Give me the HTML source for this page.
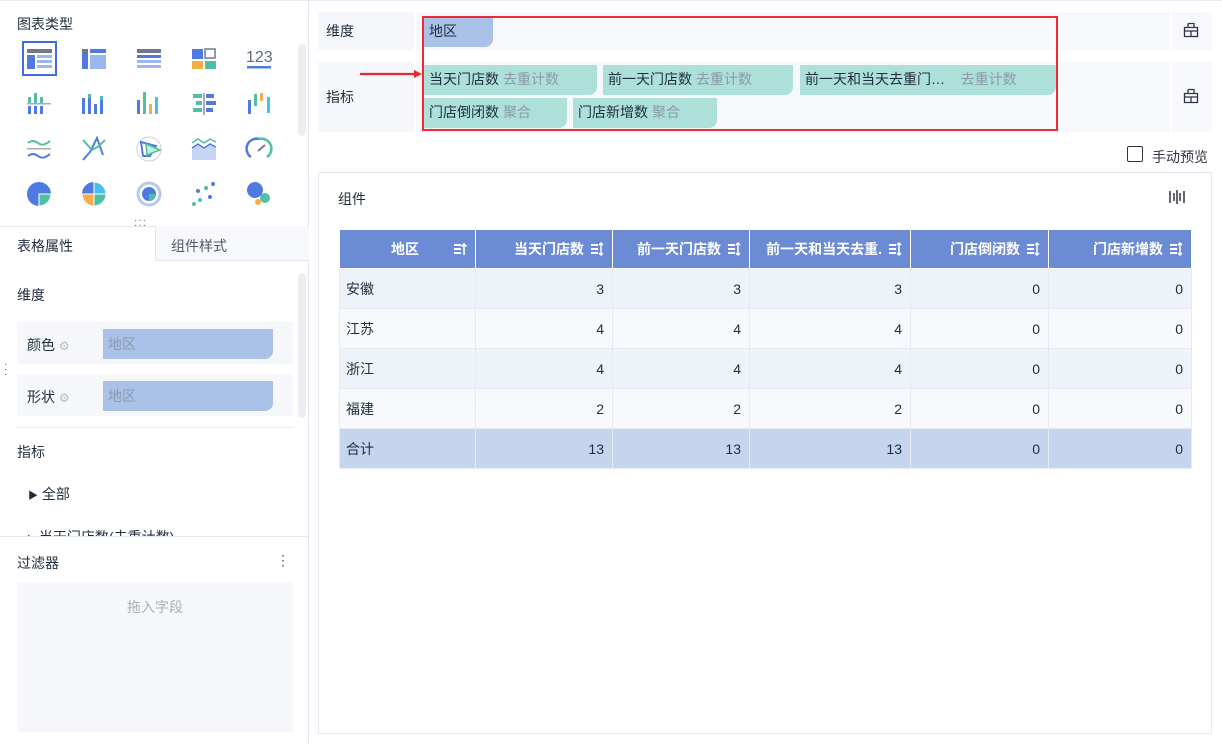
<!DOCTYPE html>
<html><head><meta charset="utf-8"><style>
*{box-sizing:border-box;margin:0;padding:0}
body{width:1222px;height:744px;position:relative;background:#fff;font-family:"Liberation Sans","Noto Sans CJK SC",sans-serif;font-size:14px;color:#1f2d3d;overflow:hidden}
.a{position:absolute}
.t{color:#1f2d3d}
.pill{position:absolute;height:30px;line-height:28px;background:#ace0d9;border-radius:0 0 8px 0;padding-left:5px;font-size:14px;color:#1f2d3d;white-space:nowrap}
.pill span{color:#8a9aa9;margin-left:4px}
table{border-collapse:collapse;position:absolute;left:339px;top:229px;table-layout:fixed}
td,th{height:40px;border:1px solid #e6ebf3;font-size:14px;font-weight:normal}
th{background:#6b8bd4;color:#fff;font-weight:bold;height:39px;border-color:#fff;text-align:right;padding-right:8px;position:relative}
td{text-align:right;padding-right:8px}
td:first-child{text-align:left;padding-left:6px}
tr.o td{background:#eef2f9}
tr.e td{background:#f7f9fc}
tr.s td{background:#c6d5ee}
.si{display:inline-block;margin-left:6px;vertical-align:-2px}
</style></head><body>
<!-- left panel -->
<div class="a" style="left:0;top:0;width:309px;height:744px;border-right:1px solid #e2e6ee"></div>
<div class="a" style="left:0;top:0;width:1222px;height:1px;background:#e6e9ef"></div>
<div class="a t" style="left:17px;top:14px;font-size:14px">图表类型</div>
<div class="a" style="left:22px;top:41px;width:35px;height:35px;border:2px solid #3f6be0"></div>
<div class="a" style="left:298px;top:44px;width:8px;height:92px;background:#eceef2;border-radius:4px"></div>
<svg class="a" style="left:0;top:0" width="309" height="220">
<!-- row1 -->
<rect x="27" y="49" width="25" height="4" fill="#6e7a8a"/><rect x="27" y="55" width="8" height="14" fill="#4f7be0"/><rect x="37" y="55" width="15" height="3" fill="#9cb6ef"/><rect x="37" y="60" width="15" height="3" fill="#9cb6ef"/><rect x="37" y="65" width="15" height="3" fill="#9cb6ef"/>
<rect x="82" y="49" width="6" height="20" fill="#4f7be0"/><rect x="82" y="49" width="6" height="4" fill="#6e7a8a"/><rect x="90" y="49" width="16" height="4" fill="#4f7be0"/><rect x="90" y="55" width="16" height="14" fill="#9cb6ef"/>
<rect x="137" y="49" width="24" height="4" fill="#6e7a8a"/><rect x="137" y="55" width="24" height="3" fill="#4f7be0"/><rect x="137" y="60" width="24" height="3" fill="#9cb6ef"/><rect x="137" y="65" width="24" height="3" fill="#9cb6ef"/>
<rect x="192" y="49" width="11" height="10" fill="#4f7be0"/><rect x="205" y="49" width="10" height="9" fill="none" stroke="#6e7a8a" stroke-width="1.5"/><rect x="192" y="61" width="11" height="8" fill="#f5ae43"/><rect x="205" y="61" width="11" height="8" fill="#4fbfa5"/>
<text x="246" y="62" font-size="16" fill="#5d6b7d" font-family="Liberation Sans">123</text><rect x="247" y="66" width="24" height="2.5" fill="#4f7be0"/>
<!-- row2 -->
<g fill="#4f7be0"><rect x="28" y="106" width="3" height="8"/><rect x="34" y="106" width="3" height="8"/><rect x="40" y="106" width="3" height="8"/></g><g fill="#4fbfa5"><rect x="28" y="97" width="3" height="6"/><rect x="34" y="93" width="3" height="10"/><rect x="40" y="97" width="3" height="6"/></g><rect x="27" y="103" width="24" height="1.5" fill="#aab"/>
<g fill="#4f7be0"><rect x="82" y="98" width="3" height="16"/><rect x="88" y="94" width="3" height="20"/><rect x="94" y="104" width="3" height="10"/><rect x="100" y="100" width="3" height="14"/></g><g fill="#4fbfa5"><rect x="88" y="94" width="3" height="4"/><rect x="100" y="96" width="3" height="4"/></g>
<rect x="137" y="100" width="3" height="14" fill="#4f7be0"/><rect x="143" y="92" width="3" height="22" fill="#4fbfa5"/><rect x="149" y="104" width="3" height="10" fill="#f5ae43"/><rect x="155" y="97" width="3" height="17" fill="#45c0ee"/>
<rect x="203" y="93" width="2" height="22" fill="#aab"/><rect x="193" y="94" width="9" height="4" fill="#4fbfa5"/><rect x="206" y="94" width="8" height="4" fill="#4f7be0"/><rect x="196" y="101" width="6" height="4" fill="#4fbfa5"/><rect x="206" y="101" width="10" height="4" fill="#4f7be0"/><rect x="193" y="108" width="9" height="4" fill="#4fbfa5"/><rect x="206" y="108" width="7" height="4" fill="#4f7be0"/>
<rect x="248" y="100" width="3" height="14" fill="#4f7be0"/><rect x="254" y="94" width="3" height="12" fill="#4fbfa5"/><rect x="260" y="93" width="3" height="8" fill="#f5ae43"/><rect x="267" y="97" width="3" height="16" fill="#45c0ee"/>
<!-- row3 -->
<path d="M28 143 q5-4 10 0 t12-2" stroke="#4fbfa5" stroke-width="2" fill="none"/><path d="M28 156 q5-4 10 0 t12-2" stroke="#4f7be0" stroke-width="2" fill="none"/><rect x="27" y="148" width="24" height="1.5" fill="#aab"/>
<path d="M83 160 L90 152 L97 138 L103 155" stroke="#4f7be0" stroke-width="2" fill="none"/><path d="M83 140 L92 150 L99 146 L105 140" stroke="#4fbfa5" stroke-width="2" fill="none"/>
<circle cx="149" cy="149" r="12" fill="none" stroke="#ccd" stroke-width="1"/><path d="M141 142 L156 146 L150 156 L143 156 Z" fill="none" stroke="#4f7be0" stroke-width="2"/><path d="M146 144 L160 150 L147 155 Z" fill="#c9ece4" stroke="#4fbfa5" stroke-width="1.5"/>
<path d="M192 148 l6-4 l6 4 l6-4 l6 3 v13 h-24z" fill="#c5d6f5"/><path d="M192 148 l6-4 l6 4 l6-4 l6 3" stroke="#4f7be0" stroke-width="1.5" fill="none"/><path d="M192 143 l6-4 l6 4 l6-4 l6 3" stroke="#4fbfa5" stroke-width="1.5" fill="none"/>
<path d="M251 157 A10 10 0 0 1 259 139" stroke="#4f7be0" stroke-width="2.5" fill="none"/><path d="M259 139 A10 10 0 0 1 267 157" stroke="#4fbfa5" stroke-width="2.5" fill="none"/><path d="M258 151 L265 145" stroke="#6e7a8a" stroke-width="2"/>
<!-- row4 -->
<circle cx="39" cy="194" r="12" fill="#4f7be0"/><path d="M39 194 h12 a12 12 0 0 1 -12 12z" fill="#4fbfa5" stroke="#fff" stroke-width="1"/>
<path d="M94 194 v-12 a12 12 0 0 0 -12 12z" fill="#4f7be0"/><path d="M94 194 h12 a12 12 0 0 0 -12 -12z" fill="#45c0ee" stroke="#fff"/><path d="M94 194 h-12 a12 12 0 0 0 12 12z" fill="#f5ae43" stroke="#fff"/><path d="M94 194 v12 a12 12 0 0 0 12 -12z" fill="#4fbfa5" stroke="#fff"/>
<circle cx="149" cy="194" r="11" fill="none" stroke="#b6c8f2" stroke-width="3"/><circle cx="149" cy="194" r="7" fill="#4f7be0"/><path d="M149 194 h7 a7 7 0 0 1 -7 7z" fill="#4fbfa5"/>
<g fill="#4f7be0"><circle cx="213" cy="184" r="2"/><circle cx="198" cy="191" r="2"/><circle cx="210" cy="197" r="2"/></g><g fill="#4fbfa5"><circle cx="206" cy="188" r="2"/><circle cx="200" cy="200" r="2"/><circle cx="194" cy="204" r="2"/></g>
<circle cx="255" cy="190" r="8" fill="#4f7be0"/><circle cx="265" cy="198" r="5" fill="#4fbfa5"/><circle cx="258" cy="202" r="3" fill="#f5ae43"/>
</svg>
<div class="a" style="left:134px;top:218px;font-size:10px;color:#556;letter-spacing:1px;line-height:5px">···<br>···</div>
<!-- tabs -->
<div class="a" style="left:0;top:226px;width:309px;height:1px;background:#e2e6ee"></div>
<div class="a" style="left:155px;top:226px;width:154px;height:35px;background:#f7f8fb;border-left:1px solid #e2e6ee;border-bottom:1px solid #e2e6ee"></div>
<div class="a t" style="left:17px;top:236px">表格属性</div>
<div class="a" style="left:171px;top:236px;color:#556">组件样式</div>
<div class="a" style="left:298px;top:273px;width:8px;height:145px;background:#eceef2;border-radius:4px"></div>
<div class="a t" style="left:17px;top:285px">维度</div>
<div class="a" style="left:17px;top:322px;width:276px;height:42px;background:#f5f7fb"></div>
<div class="a" style="left:17px;top:374px;width:276px;height:42px;background:#f5f7fb"></div>
<div class="a t" style="left:27px;top:335px">颜色 <span style="color:#bbb;font-size:12px">⚙</span></div>
<div class="a t" style="left:27px;top:387px">形状 <span style="color:#bbb;font-size:12px">⚙</span></div>
<div class="a" style="left:103px;top:329px;width:170px;height:30px;background:#abc2e8;border-radius:0 0 8px 0;color:#8a9ab5;padding-left:5px;line-height:30px">地区</div>
<div class="a" style="left:103px;top:381px;width:170px;height:30px;background:#abc2e8;border-radius:0 0 8px 0;color:#8a9ab5;padding-left:5px;line-height:30px">地区</div>
<div class="a" style="left:4px;top:362px;font-size:10px;color:#556;line-height:5px">·<br>·<br>·</div>
<div class="a" style="left:17px;top:427px;width:276px;height:1px;background:#e6e9ef"></div>
<div class="a t" style="left:17px;top:442px">指标</div>
<div class="a t" style="left:28px;top:484px"><span style="font-size:10px">▶</span> 全部</div>
<div class="a" style="left:28px;top:526px;height:10px;overflow:hidden;width:200px;color:#1f2d3d"><div style="margin-top:1px">▸ 当天门店数(去重计数)</div></div>
<div class="a" style="left:0;top:536px;width:309px;height:1px;background:#e2e6ee"></div>
<div class="a t" style="left:17px;top:553px">过滤器</div>
<div class="a" style="left:276px;top:552px;font-size:14px;color:#556">⋮</div>
<div class="a" style="left:17px;top:582px;width:276px;height:150px;background:#f5f7fb;text-align:center;color:#a9b0bb;padding-top:15px">拖入字段</div>
<!-- right top bars -->
<div class="a" style="left:318px;top:12px;width:96px;height:38px;background:#f5f7fb;line-height:38px;padding-left:8px">维度</div>
<div class="a" style="left:416px;top:12px;width:754px;height:38px;background:#f7f8fc"></div>
<div class="a" style="left:1172px;top:12px;width:40px;height:38px;background:#f7f8fc"></div>
<div class="a" style="left:318px;top:62px;width:96px;height:70px;background:#f5f7fb;line-height:70px;padding-left:8px">指标</div>
<div class="a" style="left:416px;top:62px;width:754px;height:70px;background:#f7f8fc"></div>
<div class="a" style="left:1172px;top:62px;width:40px;height:70px;background:#f7f8fc"></div>
<svg class="a" style="left:1183px;top:22px" width="16" height="16"><path d="M5 1.5h6v4M5 1.5v4M1.5 5.5h13v9h-13zM1.5 9h13M8 9v5" fill="none" stroke="#334" stroke-width="1.3"/></svg>
<svg class="a" style="left:1183px;top:88px" width="16" height="16"><path d="M5 1.5h6v4M5 1.5v4M1.5 5.5h13v9h-13zM1.5 9h13M8 9v5" fill="none" stroke="#334" stroke-width="1.3"/></svg>
<div class="pill" style="left:424px;top:17px;width:69px;background:#abc2e8">地区</div>
<div class="pill" style="left:424px;top:65px;width:173px">当天门店数<span>去重计数</span></div>
<div class="pill" style="left:603px;top:65px;width:190px">前一天门店数<span>去重计数</span></div>
<div class="pill" style="left:800px;top:65px;width:256px">前一天和当天去重门…&nbsp;&nbsp;&nbsp;<span>去重计数</span></div>
<div class="pill" style="left:424px;top:98px;width:143px">门店倒闭数<span>聚合</span></div>
<div class="pill" style="left:573px;top:98px;width:144px">门店新增数<span>聚合</span></div>
<div class="a" style="left:422px;top:16px;width:636px;height:115px;border:2px solid #ee2a35"></div>
<svg class="a" style="left:358px;top:68px" width="66" height="12"><path d="M2 6 H56" stroke="#e8262e" stroke-width="2.2"/><path d="M56 2 L64 6 L56 10z" fill="#e8262e"/></svg>
<div class="a" style="left:1127px;top:146px;width:16px;height:16px;border:1.5px solid #334;border-radius:2px"></div>
<div class="a" style="left:1152px;top:147px;color:#334">手动预览</div>
<!-- component panel -->
<div class="a" style="left:318px;top:172px;width:894px;height:562px;border:1px solid #e4e8ef"></div>
<div class="a t" style="left:338px;top:189px">组件</div>
<svg class="a" style="left:1168px;top:188px" width="18" height="18"><path d="M2 3v12M6 5v8M9 2v14M12 5v8M16 3v12" stroke="#334" stroke-width="1.5"/></svg>
<table>
<colgroup><col style="width:136px"><col style="width:137px"><col style="width:137px"><col style="width:161px"><col style="width:138px"><col style="width:143px"></colgroup>
<tr><th>地区<span style="display:inline-block;width:28px"></span><svg class="si" width="14" height="14"><path d="M1 3h7M1 7h7M1 11h7" stroke="#fff" stroke-width="2"/><path d="M11 13V2M8.5 4.5L11 2l2.5 2.5" stroke="#fff" stroke-width="1.6" fill="none"/></svg></th>
<th>当天门店数<svg class="si" width="14" height="14"><path d="M1 3h7M1 7h7M1 11h7" stroke="#fff" stroke-width="2"/><path d="M11 1v12M9 3l2-2 2 2M9 11l2 2 2-2" stroke="#fff" stroke-width="1.5" fill="none"/></svg></th>
<th>前一天门店数<svg class="si" width="14" height="14"><path d="M1 3h7M1 7h7M1 11h7" stroke="#fff" stroke-width="2"/><path d="M11 1v12M9 3l2-2 2 2M9 11l2 2 2-2" stroke="#fff" stroke-width="1.5" fill="none"/></svg></th>
<th style="white-space:nowrap;overflow:hidden">前一天和当天去重.<svg class="si" width="14" height="14"><path d="M1 3h7M1 7h7M1 11h7" stroke="#fff" stroke-width="2"/><path d="M11 1v12M9 3l2-2 2 2M9 11l2 2 2-2" stroke="#fff" stroke-width="1.5" fill="none"/></svg></th>
<th>门店倒闭数<svg class="si" width="14" height="14"><path d="M1 3h7M1 7h7M1 11h7" stroke="#fff" stroke-width="2"/><path d="M11 1v12M9 3l2-2 2 2M9 11l2 2 2-2" stroke="#fff" stroke-width="1.5" fill="none"/></svg></th>
<th>门店新增数<svg class="si" width="14" height="14"><path d="M1 3h7M1 7h7M1 11h7" stroke="#fff" stroke-width="2"/><path d="M11 1v12M9 3l2-2 2 2M9 11l2 2 2-2" stroke="#fff" stroke-width="1.5" fill="none"/></svg></th></tr>
<tr class="o"><td>安徽</td><td>3</td><td>3</td><td>3</td><td>0</td><td>0</td></tr>
<tr class="e"><td>江苏</td><td>4</td><td>4</td><td>4</td><td>0</td><td>0</td></tr>
<tr class="o"><td>浙江</td><td>4</td><td>4</td><td>4</td><td>0</td><td>0</td></tr>
<tr class="e"><td>福建</td><td>2</td><td>2</td><td>2</td><td>0</td><td>0</td></tr>
<tr class="s"><td>合计</td><td>13</td><td>13</td><td>13</td><td>0</td><td>0</td></tr>
</table>
</body></html>
